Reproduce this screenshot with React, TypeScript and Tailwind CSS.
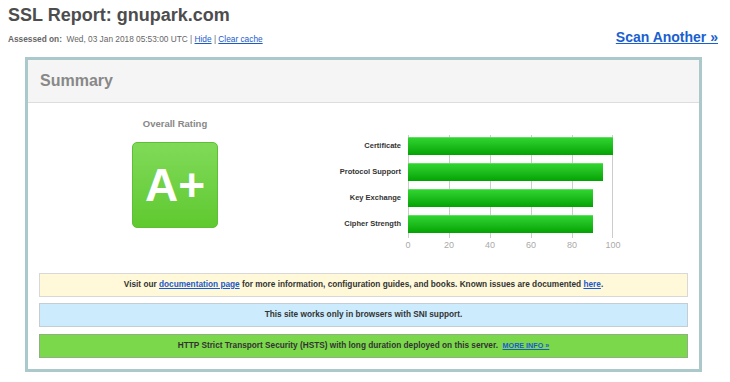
import React from 'react'

const bars = [
  { label: 'Certificate', value: 100 },
  { label: 'Protocol Support', value: 95 },
  { label: 'Key Exchange', value: 90 },
  { label: 'Cipher Strength', value: 90 },
]

const ticks = [0, 20, 40, 60, 80, 100]

function RatingChart() {
  return (
    <div className="flex pt-[30px]">
      <div className="w-[79px] flex flex-col">
        {bars.map((b) => (
          <div key={b.label} className="h-[26px] flex items-center justify-end text-[7.5px] font-bold text-[#333]">
            {b.label}
          </div>
        ))}
      </div>
      <div className="ml-[7px] w-[205px]">
        <div className="relative">
          {ticks.map((t) => (
            <div
              key={t}
              className="absolute top-[2px] h-[103px] w-px bg-[#cccccc]"
              style={{ left: `${(t / 100) * 205 - (t === 100 ? 1 : 0)}px` }}
            />
          ))}
          {bars.map((b) => (
            <div key={b.label} className="relative h-[26px] flex items-center">
              <div
                className="h-[18px] bg-gradient-to-b from-[#2fd42f] to-[#00a300] border-t border-[#5ee05e]"
                style={{ width: `${(b.value / 100) * 205}px` }}
              />
            </div>
          ))}
          <div className="relative h-[18px]">
            {ticks.map((t) => (
              <span
                key={t}
                className="absolute top-[2px] -translate-x-1/2 text-[9px] text-[#aaa]"
                style={{ left: `${(t / 100) * 205}px` }}
              >
                {t}
              </span>
            ))}
          </div>
        </div>
      </div>
    </div>
  )
}

export default function App() {
  return (
    <div className="w-[730px] h-[382px] bg-white font-['Liberation_Sans',Arial,sans-serif]">
      <div className="flex items-start justify-between pl-[8px] pr-[12px]">
        <div>
          <h1 className="pt-[5px] text-[18px] leading-[20px] font-bold text-[#4d4d4d]">SSL Report: gnupark.com</h1>
          <div className="mt-[8px] text-[8.3px] leading-[12px] text-[#666]">
            <span className="font-bold">Assessed on:</span>&nbsp;&nbsp;Wed, 03 Jan 2018 05:53:00 UTC |{' '}
            <a className="text-[#1a5acb] underline">Hide</a> | <a className="text-[#1a5acb] underline">Clear cache</a>
          </div>
        </div>
        <a className="mt-[29px] text-[14px] leading-[16px] font-bold text-[#1a5fd0] underline">Scan Another »</a>
      </div>

      <div className="ml-[25px] mt-[12px] w-[677px] h-[315px] border-[3px] border-[#abc9cb]">
        <div className="h-[43px] bg-[#f5f5f5] border-b border-[#dddddd] flex items-center pl-[12px]">
          <span className="text-[16px] font-bold text-[#888]">Summary</span>
        </div>

        <div className="h-[170px] flex">
          <div className="w-[294px] flex flex-col items-center pt-[15px]">
            <div className="text-[9.5px] leading-[12px] font-bold text-[#888]">Overall Rating</div>
            <div className="mt-[12px] w-[86px] h-[86px] rounded-[5px] border border-[#5cbf35] bg-gradient-to-b from-[#80da58] to-[#5fc92e] flex items-center justify-center">
              <span className="text-[46px] leading-none font-bold text-white">A+</span>
            </div>
          </div>
          <RatingChart />
        </div>

        <div className="px-[11px] flex flex-col gap-[6px] text-[8.25px] font-bold text-[#333]">
          <div className="h-[24px] bg-[#fff9da] border border-[#d8d8d8] flex items-center justify-center">
            <span>
              Visit our <a className="text-[#1a5acb] underline">documentation page</a> for more information, configuration guides, and books. Known issues are documented{' '}
              <a className="text-[#1a5acb] underline">here</a>.
            </span>
          </div>
          <div className="h-[24px] bg-[#ccecfd] border border-[#c4ccd4] flex items-center justify-center">
            This site works only in browsers with SNI support.
          </div>
          <div className="mt-[1px] h-[24px] bg-[#7bd84b] border border-[#8fb080] flex items-center justify-center">
            <span>
              HTTP Strict Transport Security (HSTS) with long duration deployed on this server.&nbsp;&nbsp;
              <a className="text-[7.2px] text-[#1a5acb] underline">MORE INFO »</a>
            </span>
          </div>
        </div>
      </div>
    </div>
  )
}
